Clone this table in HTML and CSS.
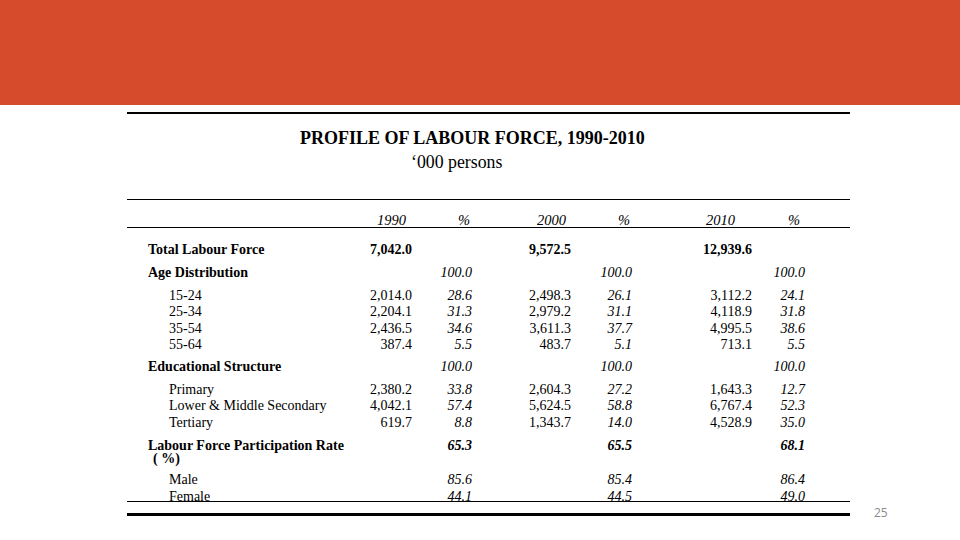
FILE: index.html
```html
<!DOCTYPE html>
<html>
<head>
<meta charset="utf-8">
<link rel="stylesheet" href="styles.css">
</head>
<body>
<header class="band"></header>
<main class="sheet">
  <div class="rule rule-top"></div>
  <h1 class="title">PROFILE OF LABOUR FORCE, 1990-2010</h1>
  <p class="subtitle">‘000 persons</p>
  <div class="rule rule-thin rule-head"></div>
  <div class="row head">
    <span></span>
    <span class="h1">1990</span><span class="h2">%</span>
    <span class="h3">2000</span><span class="h4">%</span>
    <span class="h5">2010</span><span class="h6">%</span>
  </div>
  <div class="rule rule-thin"></div>

  <div class="row sec first">
    <span class="lbl b">Total Labour Force</span>
    <span class="b">7,042.0</span><span></span>
    <span class="b">9,572.5</span><span></span>
    <span class="b">12,939.6</span><span></span>
  </div>
  <div class="row sec">
    <span class="lbl b">Age Distribution</span>
    <span></span><span class="p">100.0</span>
    <span></span><span class="p">100.0</span>
    <span></span><span class="p">100.0</span>
  </div>
  <div class="row sub gap">
    <span class="lbl ind">15-24</span>
    <span>2,014.0</span><span class="p">28.6</span>
    <span>2,498.3</span><span class="p">26.1</span>
    <span>3,112.2</span><span class="p">24.1</span>
  </div>
  <div class="row sub">
    <span class="lbl ind">25-34</span>
    <span>2,204.1</span><span class="p">31.3</span>
    <span>2,979.2</span><span class="p">31.1</span>
    <span>4,118.9</span><span class="p">31.8</span>
  </div>
  <div class="row sub">
    <span class="lbl ind">35-54</span>
    <span>2,436.5</span><span class="p">34.6</span>
    <span>3,611.3</span><span class="p">37.7</span>
    <span>4,995.5</span><span class="p">38.6</span>
  </div>
  <div class="row sub">
    <span class="lbl ind">55-64</span>
    <span>387.4</span><span class="p">5.5</span>
    <span>483.7</span><span class="p">5.1</span>
    <span>713.1</span><span class="p">5.5</span>
  </div>
  <div class="row sec edu">
    <span class="lbl b">Educational Structure</span>
    <span></span><span class="p">100.0</span>
    <span></span><span class="p">100.0</span>
    <span></span><span class="p">100.0</span>
  </div>
  <div class="row sub gap">
    <span class="lbl ind">Primary</span>
    <span>2,380.2</span><span class="p">33.8</span>
    <span>2,604.3</span><span class="p">27.2</span>
    <span>1,643.3</span><span class="p">12.7</span>
  </div>
  <div class="row sub">
    <span class="lbl ind">Lower &amp; Middle Secondary</span>
    <span>4,042.1</span><span class="p">57.4</span>
    <span>5,624.5</span><span class="p">58.8</span>
    <span>6,767.4</span><span class="p">52.3</span>
  </div>
  <div class="row sub">
    <span class="lbl ind">Tertiary</span>
    <span>619.7</span><span class="p">8.8</span>
    <span>1,343.7</span><span class="p">14.0</span>
    <span>4,528.9</span><span class="p">35.0</span>
  </div>
  <div class="row sec gap lfpr">
    <span class="lbl b">Labour Force Participation Rate<span class="wrap">( %)</span></span>
    <span></span><span class="p b">65.3</span>
    <span></span><span class="p b">65.5</span>
    <span></span><span class="p b">68.1</span>
  </div>
  <div class="row sub male">
    <span class="lbl ind">Male</span>
    <span></span><span class="p">85.6</span>
    <span></span><span class="p">85.4</span>
    <span></span><span class="p">86.4</span>
  </div>
  <div class="row sub">
    <span class="lbl ind">Female</span>
    <span></span><span class="p">44.1</span>
    <span></span><span class="p">44.5</span>
    <span></span><span class="p">49.0</span>
  </div>
  <div class="foot">
    <div class="rule rule-thin rule-end"></div>
    <div class="rule rule-bottom"></div>
    <span class="pageno">25</span>
  </div>
</main>
</body>
</html>
```

FILE: styles.css
```css
* { box-sizing: border-box; }
html, body { margin: 0; padding: 0; background: #ffffff; }
body {
  width: 960px;
  height: 540px;
  overflow: hidden;
  font-family: "Liberation Serif", "Times New Roman", serif;
  color: #000;
}
.band {
  height: 105px;
  background: #d54b2b;
}
.sheet {
  margin-left: 127px;
  width: 723px;
}
.rule { background: #000; }
.rule-top { height: 2px; margin-top: 7px; }
.rule-thin { height: 1px; }
.rule-bottom { height: 3px; margin-top: 11px; }
.title {
  margin: 14px 0 0 0;
  padding-left: 173px;
  font-size: 18px;
  font-weight: bold;
  line-height: 20px;
}
.subtitle {
  margin: 4px 0 0 0;
  padding-left: 284px;
  font-size: 17.8px;
  line-height: 20px;
}
.rule-head { margin-top: 27px; }
.row {
  display: grid;
  grid-template-columns: 202px 62px 60px 99px 61px 120px 53px;
  padding-left: 21px;
  font-size: 14px;
  line-height: 16.5px;
  text-align: right;
  white-space: nowrap;
}
.row .lbl { text-align: left; }
.head {
  margin-top: 13px;
  line-height: 14px;
  font-style: italic;
  font-size: 14.5px;
}
.head .h1 { padding-right: 6px; }
.head .h2 { padding-right: 2px; }
.head .h3 { padding-right: 5px; }
.head .h4 { padding-right: 2px; }
.head .h5 { padding-right: 17px; }
.head .h6 { padding-right: 5px; }
.b { font-weight: bold; }
.p { font-style: italic; }
.ind { padding-left: 21px; }
.first { margin-top: 13.75px; }
.sec { margin-top: 6.5px; }
.first.sec { margin-top: 13.75px; }
.gap { margin-top: 6.5px; }
.edu { margin-top: 5px; }
.lfpr .wrap {
  display: block;
  padding-left: 5px;
  line-height: 12px;
  margin-top: -1px;
}
.male { margin-top: 7px; }
.foot { position: relative; }
.rule-end { margin-top: -4px; }
.pageno {
  position: absolute;
  left: 747px;
  top: 5px;
  font-family: "Open Sans", "Liberation Sans", sans-serif;
  font-size: 12px;
  line-height: 14px;
  color: #8a8a8a;
}
```
